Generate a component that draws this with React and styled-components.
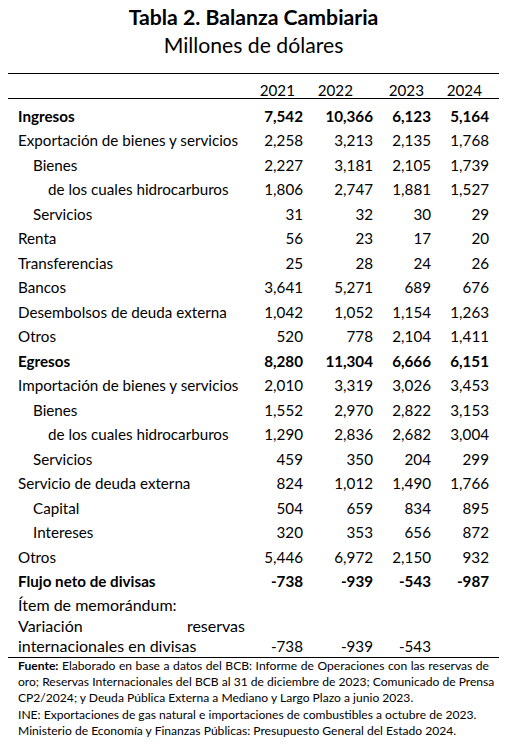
import React from "react";
import styled, { createGlobalStyle } from "styled-components";

const GlobalStyle = createGlobalStyle`
  html, body {
    margin: 0;
    padding: 0;
    background: #fff;
  }
  body {
    font-family: Lato, "Open Sans", sans-serif;
    color: #000;
  }
`;

const COLS = "242px 60px 70px 58px 61px";

const rows = [
  { label: "Ingresos", level: 0, bold: true, values: ["7,542", "10,366", "6,123", "5,164"] },
  { label: "Exportación de bienes y servicios", level: 0, values: ["2,258", "3,213", "2,135", "1,768"] },
  { label: "Bienes", level: 1, values: ["2,227", "3,181", "2,105", "1,739"] },
  { label: "de los cuales hidrocarburos", level: 2, values: ["1,806", "2,747", "1,881", "1,527"] },
  { label: "Servicios", level: 1, values: ["31", "32", "30", "29"] },
  { label: "Renta", level: 0, values: ["56", "23", "17", "20"] },
  { label: "Transferencias", level: 0, values: ["25", "28", "24", "26"] },
  { label: "Bancos", level: 0, values: ["3,641", "5,271", "689", "676"] },
  { label: "Desembolsos de deuda externa", level: 0, values: ["1,042", "1,052", "1,154", "1,263"] },
  { label: "Otros", level: 0, values: ["520", "778", "2,104", "1,411"] },
  { label: "Egresos", level: 0, bold: true, values: ["8,280", "11,304", "6,666", "6,151"] },
  { label: "Importación de bienes y servicios", level: 0, values: ["2,010", "3,319", "3,026", "3,453"] },
  { label: "Bienes", level: 1, values: ["1,552", "2,970", "2,822", "3,153"] },
  { label: "de los cuales hidrocarburos", level: 2, values: ["1,290", "2,836", "2,682", "3,004"] },
  { label: "Servicios", level: 1, values: ["459", "350", "204", "299"] },
  { label: "Servicio de deuda externa", level: 0, values: ["824", "1,012", "1,490", "1,766"] },
  { label: "Capital", level: 1, values: ["504", "659", "834", "895"] },
  { label: "Intereses", level: 1, values: ["320", "353", "656", "872"] },
  { label: "Otros", level: 0, values: ["5,446", "6,972", "2,150", "932"] },
  { label: "Flujo neto de divisas", level: 0, bold: true, values: ["-738", "-939", "-543", "-987"] },
];

const years = [
  { year: "2021", pad: 15 },
  { year: "2022", pad: 27 },
  { year: "2023", pad: 14 },
  { year: "2024", pad: 17 },
];

const App = () => {
  return (
    <Page>
      <GlobalStyle />
      <Title>
        <TitleMain>Tabla 2. Balanza Cambiaria</TitleMain>
        <TitleSub>Millones de dólares</TitleSub>
      </Title>

      <Table>
        <HeaderRow>
          <span />
          {years.map((y) => (
            <HeaderCell key={y.year} $pad={y.pad}>
              {y.year}
            </HeaderCell>
          ))}
        </HeaderRow>

        <Body>
          {rows.map((r, i) => (
            <Row key={i} $bold={r.bold}>
              <Label $level={r.level}>{r.label}</Label>
              {r.values.map((v, j) => (
                <Num key={j}>{v}</Num>
              ))}
            </Row>
          ))}

          <Memo>
            <MemoTitle>Ítem de memorándum:</MemoTitle>
            <MemoRow>
              <MemoLabel>Variación reservas internacionales en divisas</MemoLabel>
              <MemoNum>-738</MemoNum>
              <MemoNum>-939</MemoNum>
              <MemoNum>-543</MemoNum>
              <MemoNum />
            </MemoRow>
          </Memo>
        </Body>
      </Table>

      <Footer>
        <FootLine $justify>
          <b>Fuente:</b> Elaborado en base a datos del BCB: Informe de Operaciones con las reservas de
        </FootLine>
        <FootLine $justify>
          oro; Reservas Internacionales del BCB al 31 de diciembre de 2023; Comunicado de Prensa
        </FootLine>
        <FootLine>CP2/2024; y Deuda Pública Externa a Mediano y Largo Plazo a junio 2023.</FootLine>
        <FootLine>INE: Exportaciones de gas natural e importaciones de combustibles a octubre de 2023.</FootLine>
        <FootLine>Ministerio de Economía y Finanzas Públicas: Presupuesto General del Estado 2024.</FootLine>
      </Footer>
    </Page>
  );
};

const Page = styled.div`
  width: 491px;
  margin-left: 8px;
  padding-top: 3px;
`;

const Title = styled.div`
  text-align: center;
  font-size: 21.2px;
  line-height: 28px;
  margin-bottom: 14px;
`;

const TitleMain = styled.div`
  font-weight: 700;
`;

const TitleSub = styled.div`
  font-weight: 400;
`;

const Table = styled.div`
  border-top: 1.5px solid #000;
  border-bottom: 1.5px solid #000;
  font-size: 15.2px;
`;

const HeaderRow = styled.div`
  display: grid;
  grid-template-columns: ${COLS};
  height: 24px;
  align-items: end;
  line-height: 15px;
  border-bottom: 1.5px solid #000;
`;

const HeaderCell = styled.span`
  text-align: right;
  padding-right: ${(p) => p.$pad}px;
`;

const Body = styled.div`
  display: flex;
  flex-direction: column;
`;

const Row = styled.div`
  display: grid;
  grid-template-columns: ${COLS};
  height: 24.5px;
  align-items: end;
  line-height: 15px;
  font-weight: ${(p) => (p.$bold ? 700 : 400)};
`;

const Label = styled.span`
  padding-left: ${(p) => 10 + p.$level * 15}px;
  white-space: nowrap;
`;

const Num = styled.span`
  text-align: right;
  padding-right: 7px;

  &:last-child {
    padding-right: 10px;
  }
`;

const Memo = styled.div`
  padding-top: 6px;
  line-height: 20.5px;
`;

const MemoTitle = styled.div`
  padding-left: 10px;
  font-size: 16px;
`;

const MemoRow = styled.div`
  display: grid;
  grid-template-columns: ${COLS};
  align-items: end;
`;

const MemoLabel = styled.div`
  padding: 0 5px 0 10px;
  font-size: 16px;
  text-align: justify;
`;

const MemoNum = styled(Num)`
  line-height: 20.5px;
`;

const Footer = styled.div`
  font-size: 12.1px;
  line-height: 16.4px;
  padding: 0 10px;
`;

const FootLine = styled.div`
  white-space: nowrap;
  text-align: ${(p) => (p.$justify ? "justify" : "left")};
  text-align-last: ${(p) => (p.$justify ? "justify" : "auto")};

  b {
    font-weight: 700;
  }
`;

export default App;
